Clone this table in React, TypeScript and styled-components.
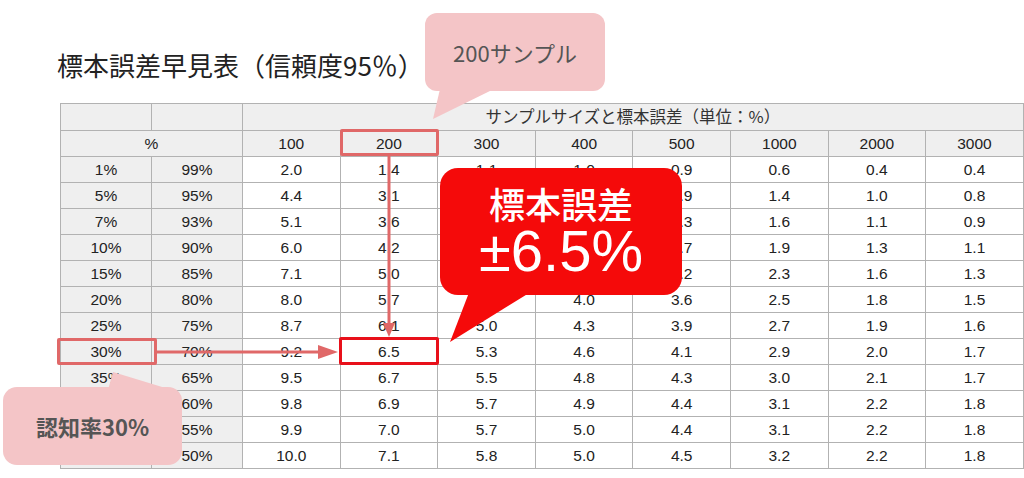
import React from "react";
import styled, { createGlobalStyle } from "styled-components";

const GlobalStyle = createGlobalStyle`
  html, body {
    margin: 0;
    padding: 0;
    background: #fff;
  }
  body {
    font-family: "Liberation Sans", "Noto Sans CJK JP", sans-serif;
  }
`;

const sizes = ["100", "200", "300", "400", "500", "1000", "2000", "3000"];

const rows: string[][] = [
  ["1%", "99%", "2.0", "1.4", "1.1", "1.0", "0.9", "0.6", "0.4", "0.4"],
  ["5%", "95%", "4.4", "3.1", "2.5", "2.2", "1.9", "1.4", "1.0", "0.8"],
  ["7%", "93%", "5.1", "3.6", "2.9", "2.6", "2.3", "1.6", "1.1", "0.9"],
  ["10%", "90%", "6.0", "4.2", "3.5", "3.0", "2.7", "1.9", "1.3", "1.1"],
  ["15%", "85%", "7.1", "5.0", "4.1", "3.6", "3.2", "2.3", "1.6", "1.3"],
  ["20%", "80%", "8.0", "5.7", "4.6", "4.0", "3.6", "2.5", "1.8", "1.5"],
  ["25%", "75%", "8.7", "6.1", "5.0", "4.3", "3.9", "2.7", "1.9", "1.6"],
  ["30%", "70%", "9.2", "6.5", "5.3", "4.6", "4.1", "2.9", "2.0", "1.7"],
  ["35%", "65%", "9.5", "6.7", "5.5", "4.8", "4.3", "3.0", "2.1", "1.7"],
  ["40%", "60%", "9.8", "6.9", "5.7", "4.9", "4.4", "3.1", "2.2", "1.8"],
  ["45%", "55%", "9.9", "7.0", "5.7", "5.0", "4.4", "3.1", "2.2", "1.8"],
  ["50%", "50%", "10.0", "7.1", "5.8", "5.0", "4.5", "3.2", "2.2", "1.8"],
];

const PINK = "#f4c5c7";
const SALMON = "#e06868";

const App: React.FC = () => {
  return (
    <>
      <GlobalStyle />
      <Page>
        <Title>標本誤差早見表（信頼度95％）</Title>
        <Table>
          <colgroup>
            <Col w={91} />
            <Col w={91} />
            {sizes.map((s) => (
              <Col key={s} w={97.6} />
            ))}
          </colgroup>
          <thead>
            <tr>
              <Cell head />
              <Cell head />
              <Cell head colSpan={8}>
                <Jp>サンプルサイズと標本誤差（単位：%）</Jp>
              </Cell>
            </tr>
            <tr>
              <Cell head colSpan={2}>%</Cell>
              {sizes.map((s) => (
                <Cell head key={s}>
                  {s}
                </Cell>
              ))}
            </tr>
          </thead>
          <tbody>
            {rows.map((r) => (
              <tr key={r[0]}>
                {r.map((v, i) => (
                  <Cell key={i} head={i < 2}>
                    {v}
                  </Cell>
                ))}
              </tr>
            ))}
          </tbody>
        </Table>

        <Overlay viewBox="0 0 1024 478">
          {/* callout tails */}
          <polygon points="440,89 494,89 433,119" fill={PINK} />
          <polygon points="470,290 534,290 450,342" fill="#f50a0a" />
          <polygon points="113,372 108,390 172,390" fill={PINK} />
          {/* arrows */}
          <line x1="389" y1="156" x2="389" y2="326" stroke={SALMON} strokeWidth="3" />
          <polygon points="383,323 395,323 389,337" fill={SALMON} />
          <line x1="157" y1="352" x2="320" y2="352" stroke={SALMON} strokeWidth="3" />
          <polygon points="318,345 318,359 338,352" fill={SALMON} />
        </Overlay>

        <Highlight x={340} y={129} w={99} h={27} color={SALMON} />
        <Highlight x={57} y={338} w={100} h={27} color={SALMON} />
        <Highlight x={339} y={337} w={100} h={28} color="#e8101a" />

        <Bubble x={425} y={13} w={180} h={78} r={12} bg={PINK}>
          <BubbleText size={22}>200サンプル</BubbleText>
        </Bubble>

        <Bubble x={3} y={387} w={179} h={78} r={14} bg={PINK}>
          <BubbleText size={22} bold>
            認知率30%
          </BubbleText>
        </Bubble>

        <RedBubble>
          <RedLabel>標本誤差</RedLabel>
          <RedValue>±6.5%</RedValue>
        </RedBubble>
      </Page>
    </>
  );
};

export default App;

const Page = styled.div`
  position: relative;
  width: 1024px;
  height: 478px;
  overflow: hidden;
  background: #fff;
`;

const Title = styled.h1`
  margin: 0;
  padding: 50px 0 0 57px;
  font-family: "Noto Sans CJK JP", sans-serif;
  font-weight: 400;
  font-size: 26px;
  line-height: 30px;
  color: #222;
`;

const Table = styled.table`
  margin: 23px 0 0 60px;
  width: 963px;
  border-collapse: collapse;
  table-layout: fixed;
  border: 1px solid #a8a8a8;
`;

const Col = styled.col<{ w: number }>`
  width: ${({ w }) => w}px;
`;

const Cell = styled.td<{ head?: boolean }>`
  height: 25px;
  padding: 0;
  border: 1px solid #b2b2b2;
  background: ${({ head }) => (head ? "#efefef" : "#fff")};
  color: #222;
  font-size: 15.5px;
  line-height: 25px;
  text-align: center;
  white-space: nowrap;
`;

const Jp = styled.span`
  font-family: "Noto Sans CJK JP", sans-serif;
  font-size: 16.5px;
  color: #333;
`;

const Overlay = styled.svg`
  position: absolute;
  left: 0;
  top: 0;
  width: 1024px;
  height: 478px;
  pointer-events: none;
`;

const Highlight = styled.div<{ x: number; y: number; w: number; h: number; color: string }>`
  position: absolute;
  left: ${({ x }) => x}px;
  top: ${({ y }) => y}px;
  width: ${({ w }) => w}px;
  height: ${({ h }) => h}px;
  box-sizing: border-box;
  border: 3px solid ${({ color }) => color};
  border-radius: 2px;
`;

const Bubble = styled.div<{ x: number; y: number; w: number; h: number; r: number; bg: string }>`
  position: absolute;
  left: ${({ x }) => x}px;
  top: ${({ y }) => y}px;
  width: ${({ w }) => w}px;
  height: ${({ h }) => h}px;
  border-radius: ${({ r }) => r}px;
  background: ${({ bg }) => bg};
  display: flex;
  align-items: center;
  justify-content: center;
`;

const BubbleText = styled.span<{ size: number; bold?: boolean }>`
  font-family: "Noto Sans CJK JP", sans-serif;
  font-size: ${({ size }) => size}px;
  font-weight: ${({ bold }) => (bold ? 700 : 400)};
  color: #555;
`;

const RedBubble = styled.div`
  position: absolute;
  left: 440px;
  top: 168px;
  width: 242px;
  height: 127px;
  box-sizing: border-box;
  padding-top: 15px;
  border-radius: 18px;
  background: #f50a0a;
  display: flex;
  flex-direction: column;
  align-items: center;
  color: #fff;
`;

const RedLabel = styled.div`
  font-family: "Noto Sans CJK JP", sans-serif;
  font-size: 36px;
  font-weight: 500;
  line-height: 40px;
`;

const RedValue = styled.div`
  font-family: "Liberation Sans", sans-serif;
  font-size: 58px;
  line-height: 56px;
`;
